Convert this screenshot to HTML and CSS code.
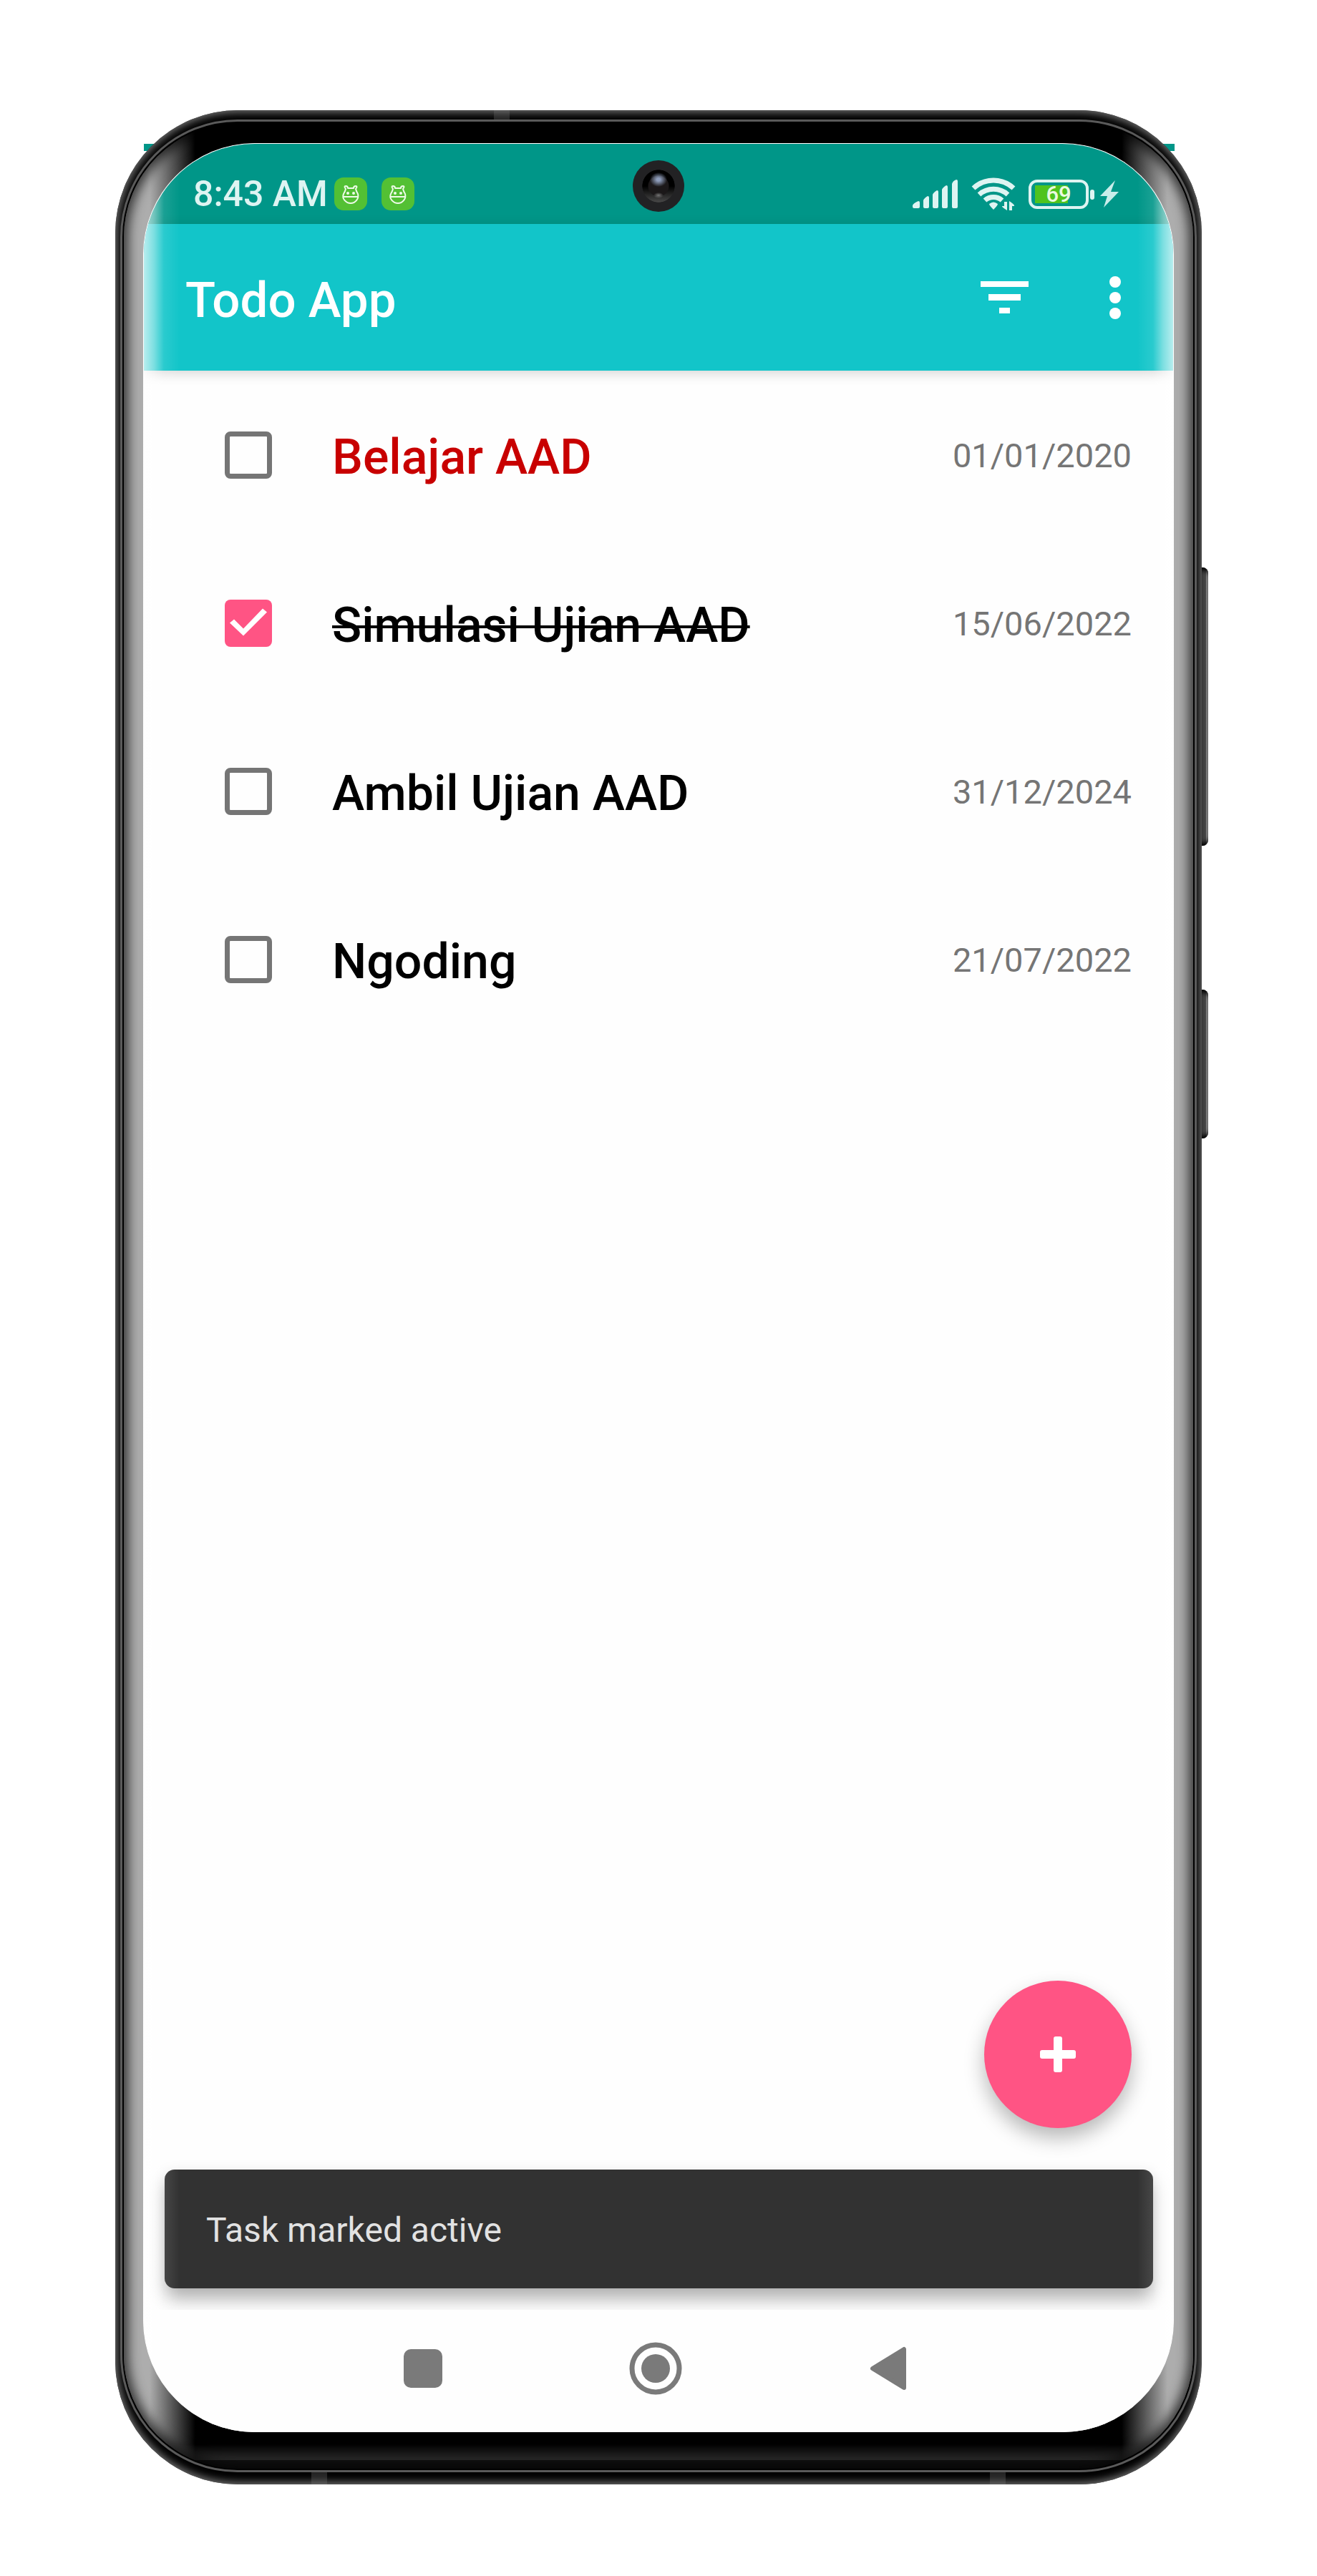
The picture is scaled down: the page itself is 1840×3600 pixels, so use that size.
FILE: index.html
```html
<!DOCTYPE html>
<html lang="id">
<head>
<meta charset="utf-8">
<meta name="viewport" content="width=device-width, initial-scale=1">
<title>Todo App</title>
<link rel="stylesheet" href="styles.css">
</head>
<body>
<div class="phone">
  <span class="side-key side-key-volume"></span>
  <span class="side-key side-key-power"></span>
  <span class="antenna antenna-top"></span>
  <span class="antenna antenna-bottom-left"></span>
  <span class="antenna antenna-bottom-right"></span>
  <div class="rim">
    <div class="bezel">
      <div class="screen">
        <span class="camera"></span>

        <div class="status-bar">
          <span class="clock">8:43 AM</span>
          <svg class="notice" viewBox="0 0 46 46" aria-hidden="true">
            <rect width="46" height="46" rx="13" fill="#53c034"/>
            <g fill="none" stroke="#effbe9" stroke-width="2" stroke-linejoin="round">
              <path d="M16 16q-3-4 0-4t3 3h8q0-3 3-3t0 4q1 4 3 7c2 7-4 13-10 13s-13-6-10-13q2-3 3-7zM12 27h22"/>
            </g>
            <circle cx="19" cy="22" r="2" fill="#effbe9"/><circle cx="27" cy="22" r="2" fill="#effbe9"/>
          </svg>
          <svg class="notice notice-next" viewBox="0 0 46 46" aria-hidden="true">
            <rect width="46" height="46" rx="13" fill="#53c034"/>
            <g fill="none" stroke="#effbe9" stroke-width="2" stroke-linejoin="round">
              <path d="M16 16q-3-4 0-4t3 3h8q0-3 3-3t0 4q1 4 3 7c2 7-4 13-10 13s-13-6-10-13q2-3 3-7zM12 27h22"/>
            </g>
            <circle cx="19" cy="22" r="2" fill="#effbe9"/><circle cx="27" cy="22" r="2" fill="#effbe9"/>
          </svg>

          <div class="system">
            <svg width="64" height="42" viewBox="0 0 64 42" fill="#def4f2" aria-hidden="true">
              <path d="M0 37q1-3 8-6q2 0 2 2v6q0 2-2 2H2q-2 0-2-2zM15 30q1-3 6-6q2 0 2 2v13q0 2-2 2h-4q-2 0-2-2zM28 22q1-3 6-6q2 0 2 2v21q0 2-2 2h-4q-2 0-2-2zM41 15q1-3 6-6q2 0 2 2v28q0 2-2 2h-4q-2 0-2-2zM55 7q1-4 6-6q2 0 2 2v36q0 2-2 2h-4q-2 0-2-2z"/>
            </svg>
            <svg width="62" height="48" viewBox="0 0 62 48" aria-hidden="true">
              <g fill="none" stroke="#def4f2" stroke-width="7">
                <path d="M3 16a41 41 0 0 1 56 0"/><path d="M11 25a30 30 0 0 1 40 0"/><path d="M19 33a18 18 0 0 1 24 0"/>
              </g>
              <path d="M25 38q6-5 12 0q0 2-6 8q-6-6-6-8z" fill="#def4f2"/>
              <path d="M46 35h4v12q-8-5-7-6h3zM53 47V34q8 5 7 7h-3v6z" fill="#def4f2"/>
            </svg>
            <span class="battery">69</span>
            <svg width="26" height="40" viewBox="0 0 26 40" fill="#c9edea" aria-hidden="true">
              <path d="M21 1L0 23h10L5 39 26 17H15z"/>
            </svg>
          </div>
        </div>

        <header class="app-bar">
          <h1 class="app-title">Todo App</h1>
          <button class="icon-button" type="button" aria-label="Filter">
            <svg width="67" height="46" viewBox="0 0 67 46" fill="#fff"><path d="M0 0h67v8H0zM11 18h45v9H11zM26 37h15v8H26z"/></svg>
          </button>
          <button class="icon-button" type="button" aria-label="More options">
            <svg width="16" height="60" viewBox="0 0 16 60" fill="#fff"><circle cx="8" cy="8" r="8"/><circle cx="8" cy="30" r="8"/><circle cx="8" cy="52" r="8"/></svg>
          </button>
        </header>

        <main class="content">
          <ul class="tasks">
            <li class="task task-overdue">
              <input class="task-check" type="checkbox" id="task-1">
              <label class="task-title" for="task-1">Belajar AAD</label>
              <time class="task-date" datetime="2020-01-01">01/01/2020</time>
            </li>
            <li class="task task-done">
              <input class="task-check" type="checkbox" id="task-2" checked>
              <label class="task-title" for="task-2">Simulasi Ujian AAD</label>
              <time class="task-date" datetime="2022-06-15">15/06/2022</time>
            </li>
            <li class="task">
              <input class="task-check" type="checkbox" id="task-3">
              <label class="task-title" for="task-3">Ambil Ujian AAD</label>
              <time class="task-date" datetime="2024-12-31">31/12/2024</time>
            </li>
            <li class="task">
              <input class="task-check" type="checkbox" id="task-4">
              <label class="task-title" for="task-4">Ngoding</label>
              <time class="task-date" datetime="2022-07-21">21/07/2022</time>
            </li>
          </ul>
          <button class="fab" type="button" aria-label="Add task">
            <svg width="50" height="50" viewBox="0 0 50 50" fill="#fff"><rect y="19" width="50" height="12" rx="3"/><rect x="19" width="12" height="50" rx="3"/></svg>
          </button>
          <div class="snackbar" role="status">Task marked active</div>
        </main>

        <nav class="nav-bar" aria-label="System navigation">
          <button class="nav-button" type="button" aria-label="Recent apps">
            <svg width="74" height="74" viewBox="0 0 74 74" fill="#7a7a7a"><rect x="10" y="10" width="54" height="54" rx="10"/></svg>
          </button>
          <button class="nav-button" type="button" aria-label="Home">
            <svg width="74" height="74" viewBox="0 0 74 74"><circle cx="37" cy="37" r="33" fill="none" stroke="#7a7a7a" stroke-width="7"/><circle cx="37" cy="37" r="20" fill="#7a7a7a"/></svg>
          </button>
          <button class="nav-button" type="button" aria-label="Back">
            <svg width="74" height="74" viewBox="0 0 74 74" fill="#7a7a7a" stroke="#7a7a7a" stroke-width="6" stroke-linejoin="round"><path d="M15 37L59 10V64z"/></svg>
          </button>
        </nav>
      </div>
    </div>
  </div>
</div>
</body>
</html>
```
FILE: styles.css
```css
* {
  box-sizing: border-box;
}

body {
  display: flex;
  min-height: 100vh;
  margin: 0;
  padding: 154px 161px 128px;
  background: #fff;
  font-family: Roboto, "Liberation Sans", sans-serif;
}

button {
  display: flex;
  align-items: center;
  justify-content: center;
  padding: 0;
  border: 0;
  background: none;
  cursor: pointer;
}

/* Device frame */

.phone {
  position: relative;
  display: flex;
  flex: 1;
  padding: 13px 7px 17px;
  border-radius: 172px;
  background: #000;
  box-shadow: inset 0 0 12px 3px #777;
}

.phone::before {
  content: "";
  position: absolute;
  z-index: -1;
  top: 47px;
  left: 40px;
  right: 38px;
  height: 10px;
  background: #009688;
}

.side-key {
  position: absolute;
  left: 100%;
  width: 9px;
  border-radius: 0 8px 8px 0;
  background: linear-gradient(90deg, #444 60%, #808080 70%);
  box-shadow: inset 0 8px 6px -4px #000, inset 0 -8px 6px -4px #000;
}

.side-key-volume {
  top: 639px;
  height: 389px;
}

.side-key-power {
  top: 1229px;
  height: 208px;
}

.antenna {
  position: absolute;
  width: 22px;
  background: rgba(120, 120, 120, 0.3);
}

.antenna-top {
  top: 0;
  left: 529px;
  height: 13px;
}

.antenna-bottom-left,
.antenna-bottom-right {
  bottom: 0;
  height: 17px;
}

.antenna-bottom-left {
  left: 274px;
}

.antenna-bottom-right {
  right: 274px;
}

.rim {
  display: flex;
  flex: 1;
  padding: 2px;
  border: 3px solid #5a5a5a;
  border-radius: 164px;
  background: #000;
}

.bezel {
  display: flex;
  flex: 1;
  padding: 28px 27px 51px;
  border-radius: 160px;
  background:
    linear-gradient(90deg, #adadad 36px, rgba(60, 60, 60, 0) 100px, rgba(60, 60, 60, 0) calc(100% - 100px), #adadad calc(100% - 36px)),
    linear-gradient(0deg, #111 12px, #2c2c2c 12px, #000 34px);
  box-shadow: inset 0 0 16px 6px rgba(0, 0, 0, 0.7);
}

.screen {
  position: relative;
  display: flex;
  flex: 1;
  flex-direction: column;
  overflow: hidden;
  border: 1px solid #fff;
  border-bottom: 0;
  border-radius: 156px;
  background: #fefefe;
}

/* Glare along the curved glass edges */
.screen::after {
  content: "";
  position: absolute;
  inset: 0;
  pointer-events: none;
  background: linear-gradient(90deg,
    rgba(255, 255, 255, 0.7), rgba(255, 255, 255, 0.45) 14px, rgba(255, 255, 255, 0.1) 28px, transparent 50px,
    transparent calc(100% - 50px), rgba(255, 255, 255, 0.1) calc(100% - 28px), rgba(255, 255, 255, 0.45) calc(100% - 14px), rgba(255, 255, 255, 0.7));
}

.camera {
  position: absolute;
  top: 23px;
  left: calc(50% - 36px);
  width: 72px;
  height: 72px;
  border-radius: 50%;
  background:
    radial-gradient(ellipse 12px 10px at 50% 27px, #8e9dbb 20%, transparent),
    radial-gradient(ellipse 7px 4px at 50% 49px, #777, transparent),
    radial-gradient(circle 15px at center, #1b1819 93%, transparent),
    radial-gradient(circle 23px at center, transparent 97%, #222224),
    linear-gradient(#000 50%, #4a4a4a 82%);
}

/* Status bar */

.status-bar {
  display: flex;
  align-items: center;
  flex: none;
  height: 112px;
  padding: 28px 76px 0 69px;
  background: #009688;
}

.clock {
  color: #def4f2;
  font-size: 50px;
  font-weight: 500;
  line-height: 56px;
}

.notice {
  width: 46px;
  height: 46px;
  margin-left: 9px;
}

.notice-next {
  margin-left: 20px;
}

.system {
  display: flex;
  align-items: center;
  gap: 18px;
  margin-left: auto;
}

.battery {
  position: relative;
  width: 84px;
  height: 41px;
  margin-right: -2px;
  border: 4px solid #def4f2;
  border-radius: 12px;
  background: linear-gradient(#4fc31e, #4fc31e) 5px 4px / 46px 25px no-repeat;
  color: #e9fae0;
  font-size: 31px;
  font-weight: 500;
  line-height: 34px;
  text-align: center;
}

.battery::after {
  content: "";
  position: absolute;
  top: 10px;
  left: 82px;
  width: 6px;
  height: 14px;
  border-radius: 3px;
  background: #def4f2;
}

/* App bar */

.app-bar {
  position: relative;
  display: flex;
  align-items: center;
  flex: none;
  height: 205px;
  padding: 0 73px 0 58px;
  background: #12c5c9;
  box-shadow: 0 4px 16px rgba(0, 0, 0, 0.16);
}

.app-title {
  margin: 0 auto 0 0;
  padding-top: 8px;
  color: #fff;
  font-size: 69px;
  font-weight: 500;
  line-height: 80px;
}

.icon-button + .icon-button {
  margin-left: 113px;
}

/* Task list */

.content {
  display: flex;
  flex: 1;
  flex-direction: column;
  overflow: hidden;
}

.tasks {
  margin: 0;
  padding: 0;
  list-style: none;
}

.task {
  display: flex;
  align-items: center;
  height: 235px;
  padding: 0 58px 0 113px;
}

.task-check {
  appearance: none;
  width: 66px;
  height: 66px;
  margin: 0 84px 0 0;
  border: 7px solid #757575;
  border-radius: 8px;
}

.task-check:checked {
  border: 0;
  background: #ff5484;
}

.task-check:checked::before {
  content: "";
  display: block;
  height: 66px;
  background: #fff;
  clip-path: polygon(7px 33px, 13px 28px, 26px 41px, 53px 13px, 59px 18px, 26px 51px);
}

.task-title {
  margin-right: auto;
  padding-top: 6px;
  color: #000;
  font-size: 68px;
  font-weight: 500;
  line-height: 80px;
}

.task-overdue .task-title {
  color: #c80000;
}

.task-done .task-title {
  text-decoration: line-through;
  text-decoration-thickness: 4px;
}

.task-date {
  padding-top: 2px;
  color: #757575;
  font-size: 47px;
  line-height: 56px;
}

.fab {
  flex: none;
  align-self: flex-end;
  width: 206px;
  height: 206px;
  margin: auto 58px 58px;
  border-radius: 50%;
  background: #ff5484;
  box-shadow: 0 14px 28px rgba(0, 0, 0, 0.28);
}

.snackbar {
  flex: none;
  margin: 0 28px 30px 29px;
  padding: 57px 58px 53px;
  border-radius: 14px;
  background: #323232;
  color: #e2e2e2;
  font-size: 48px;
  line-height: 56px;
  box-shadow: 0 14px 26px rgba(0, 0, 0, 0.32);
}

/* System navigation */

.nav-bar {
  display: flex;
  align-items: center;
  justify-content: center;
  flex: none;
  gap: 251px;
  height: 171px;
  padding: 0 8px 8px 0;
  background: #fefefe;
}
```
